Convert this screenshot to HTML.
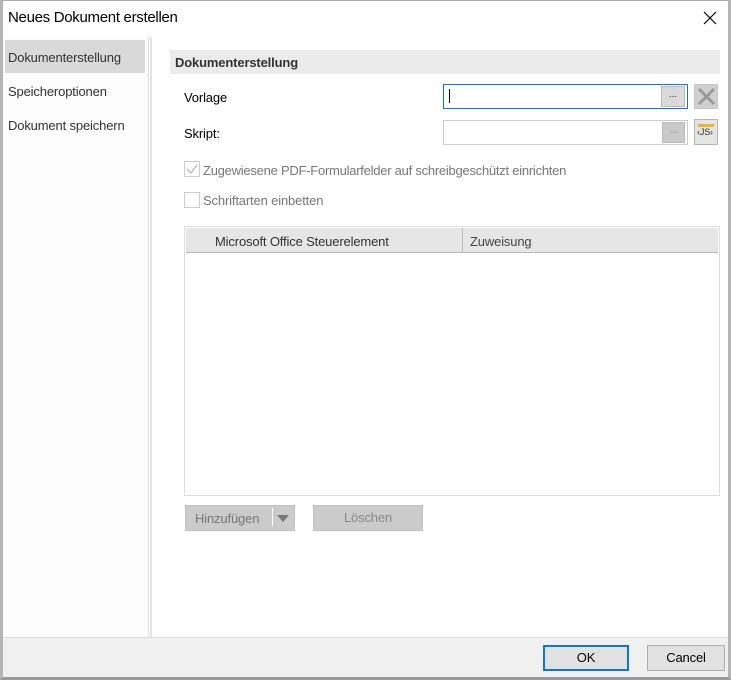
<!DOCTYPE html>
<html><head><meta charset="utf-8"><style>
*{box-sizing:border-box;margin:0;padding:0}
body{width:731px;height:680px;position:relative;background:#fff;font-family:"Liberation Sans",sans-serif;font-size:13px;color:#000;overflow:hidden;letter-spacing:-0.15px}
.a{position:absolute}
</style></head><body>
<div class="a" style="left:0;top:0;width:731px;height:680px;border:1px solid #aaa;border-left:3px solid #b4b4b4;border-right:3px solid #b4b4b4;border-bottom:3px solid #9a9a9a"></div>
<div class="a" style="left:8px;top:9px;font-size:15px;letter-spacing:-0.3px">Neues Dokument erstellen</div>
<svg class="a" style="left:703px;top:11px" width="14" height="14"><path d="M1 1L13 13M13 1L1 13" stroke="#000" stroke-width="1.2"/></svg>
<div class="a" style="left:3px;top:37px;width:146px;height:600px;background:#fcfcfc;border-right:1px solid #ddd"></div>
<div class="a" style="left:150px;top:37px;width:2px;height:600px;background:#e4e4e4"></div>
<div class="a" style="left:5px;top:40px;width:140px;height:33px;background:#d9d9d9"></div>
<div class="a" style="left:8px;top:50px;color:#333">Dokumenterstellung</div>
<div class="a" style="left:8px;top:84px;color:#333">Speicheroptionen</div>
<div class="a" style="left:8px;top:118px;color:#333">Dokument speichern</div>
<div class="a" style="left:170px;top:50px;width:550px;height:24px;background:#ebebeb"></div>
<div class="a" style="left:175px;top:55px;font-weight:bold;color:#333">Dokumenterstellung</div>
<div class="a" style="left:184px;top:90px">Vorlage</div>
<div class="a" style="left:184px;top:126px">Skript:</div>
<div class="a" style="left:443px;top:84px;width:245px;height:25px;border:1px solid #0a78d7;background:#fff"></div>
<div class="a" style="left:449px;top:89px;width:1px;height:14px;background:#000"></div>
<div class="a" style="left:661px;top:86px;width:24px;height:21px;background:#dadada;border:1px solid #bbb;font-size:10px;text-align:center;line-height:16px;color:#333">...</div>
<div class="a" style="left:694px;top:84px;width:24px;height:25px;background:#d0d0d0;border:1px solid #c4c4c4"></div>
<svg class="a" style="left:697px;top:87px" width="19" height="19"><path d="M2 2L17 17M17 2L2 17" stroke="#9a9a9a" stroke-width="3"/></svg>
<div class="a" style="left:443px;top:120px;width:245px;height:25px;border:1px solid #ccc;background:#fff"></div>
<div class="a" style="left:662px;top:122px;width:23px;height:21px;background:#cacaca;border:1px solid #bbb;font-size:10px;text-align:center;line-height:16px;color:#777">...</div>
<div class="a" style="left:694px;top:119px;width:24px;height:26px;background:#e4e4e4;border:1px solid #b4b4b4"></div>
<div class="a" style="left:698px;top:124px;width:16px;height:3px;background:#f0b429"></div>
<div class="a" style="left:697px;top:127px;font-size:9px;color:#333">‹JS›</div>
<div class="a" style="left:184px;top:161px;width:16px;height:16px;border:1px solid #ccc;background:#fff"></div>
<svg class="a" style="left:186px;top:163px" width="12" height="12"><path d="M1 6L5 10L11 2" stroke="#bbb" stroke-width="1.3" fill="none"/></svg>
<div class="a" style="left:203px;top:163px;color:#777;letter-spacing:-0.25px">Zugewiesene PDF-Formularfelder auf schreibgeschützt einrichten</div>
<div class="a" style="left:184px;top:192px;width:16px;height:16px;border:1px solid #ccc;background:#fff"></div>
<div class="a" style="left:203px;top:193px;color:#777">Schriftarten einbetten</div>
<div class="a" style="left:184px;top:226px;width:536px;height:270px;border:1px solid #ddd;background:#fff"></div>
<div class="a" style="left:186px;top:228px;width:532px;height:25px;background:#e6e6e6;border-bottom:1px solid #bbb"></div>
<div class="a" style="left:462px;top:228px;width:1px;height:25px;background:#bbb"></div>
<div class="a" style="left:215px;top:234px;color:#333">Microsoft Office Steuerelement</div>
<div class="a" style="left:470px;top:234px;color:#444">Zuweisung</div>
<div class="a" style="left:185px;top:505px;width:110px;height:26px;background:#cbcbcb;border:1px solid #c0c0c0"></div>
<div class="a" style="left:195px;top:511px;color:#777">Hinzufügen</div>
<div class="a" style="left:272px;top:508px;width:1px;height:18px;background:#fff"></div>
<svg class="a" style="left:277px;top:515px" width="12" height="8"><path d="M0 0H12L6 7Z" fill="#777"/></svg>
<div class="a" style="left:313px;top:505px;width:110px;height:26px;background:#cbcbcb;border:1px solid #c0c0c0;text-align:center;line-height:24px;color:#888">Löschen</div>
<div class="a" style="left:3px;top:637px;width:725px;height:40px;background:#f0f0f0;border-top:1px solid #ddd"></div>
<div class="a" style="left:543px;top:645px;width:86px;height:26px;background:#e1e1e1;border:2px solid #0a78d7;text-align:center;line-height:22px">OK</div>
<div class="a" style="left:647px;top:645px;width:78px;height:26px;background:#e1e1e1;border:1px solid #adadad;text-align:center;line-height:24px">Cancel</div>
</body></html>
